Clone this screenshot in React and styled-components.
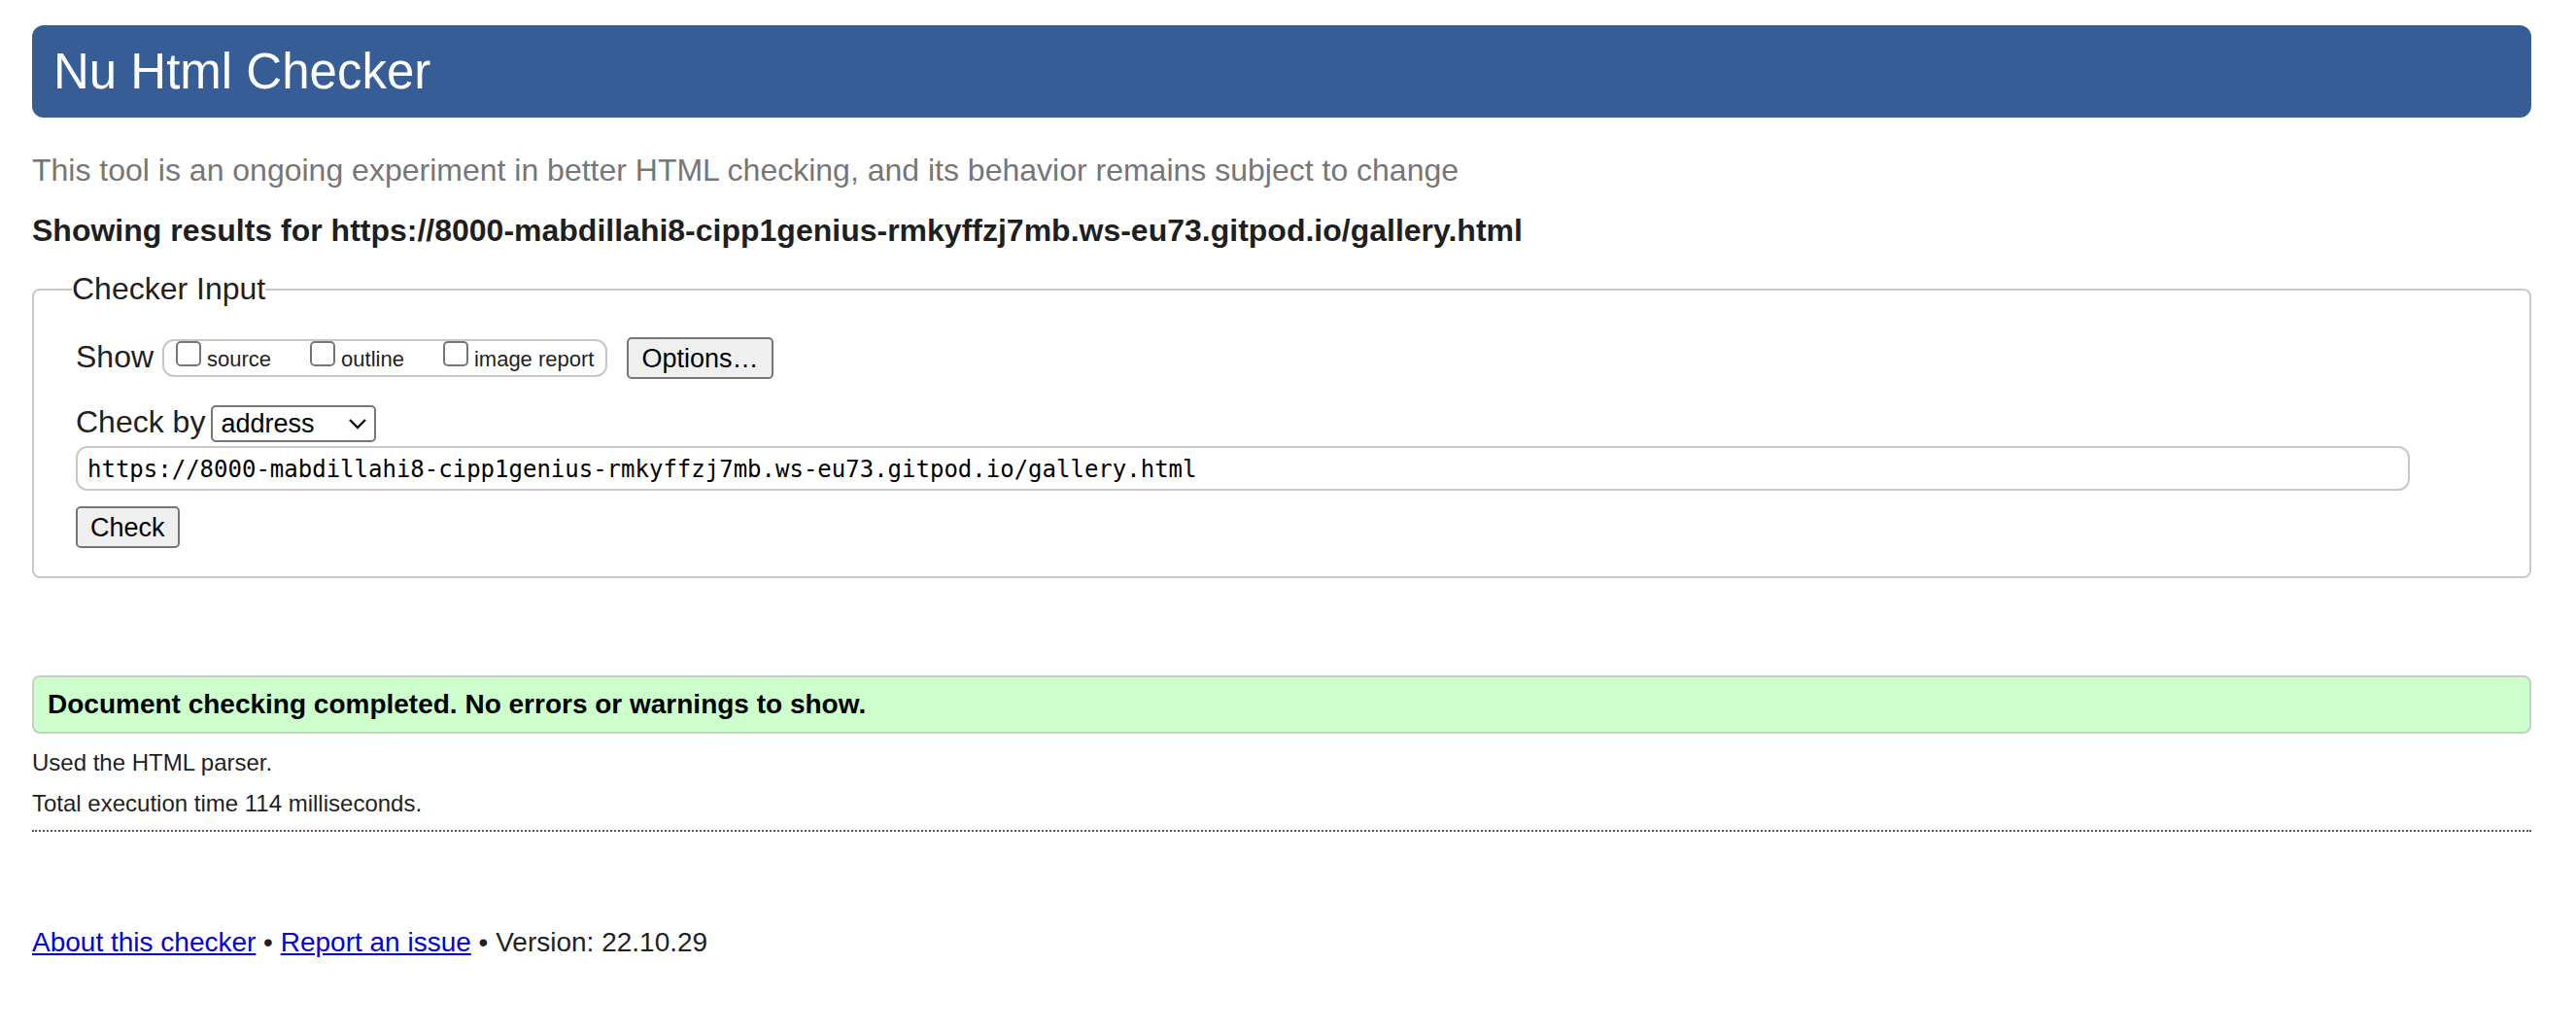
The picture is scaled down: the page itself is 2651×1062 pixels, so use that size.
import React from "react";
import styled, { createGlobalStyle } from "styled-components";

const Global = createGlobalStyle`
  *, *::before, *::after { box-sizing: border-box; }
  body {
    margin: 0;
    background: #fff;
    color: #1f1f1f;
    font-family: "Liberation Sans", Arial, sans-serif;
  }
`;

const Page = styled.div`
  padding: 26px 46px 64px 33px;
`;

const Title = styled.h1`
  margin: 0 0 34px;
  padding: 0 22px;
  border-radius: 12px;
  background: #365d95;
  color: #fdfdff;
  font-size: 51px;
  font-weight: 400;
  line-height: 95px;
`;

const Tagline = styled.p`
  margin: 0 0 22px;
  color: #767676;
  font-size: 32px;
  line-height: 40px;
`;

const ResultsHeading = styled.h2`
  margin: 0 0 21px;
  font-size: 32px;
  line-height: 40px;
`;

const InputPanel = styled.fieldset`
  display: block;
  min-width: 0;
  margin: 0;
  padding: 30px 43px 29px;
  border: 2px solid #c8c8c8;
  border-radius: 8px;
`;

const Legend = styled.legend`
  margin-left: -4px;
  padding: 0;
  font-size: 32px;
  line-height: 39px;
`;

const Row = styled.div`
  display: flex;
  align-items: center;
  gap: ${(p) => p.$gap}px;
  margin-bottom: ${(p) => p.$after}px;
`;

const RowLabel = styled.label`
  padding-bottom: 4px;
  font-size: 32px;
  line-height: 34px;
`;

const ShowGroup = styled.div`
  display: flex;
  align-items: center;
  gap: 40px;
  height: 39px;
  margin-right: 11px;
  padding: 0 12px;
  border: 2px solid #c8c8c8;
  border-radius: 12px;
`;

const CheckLabel = styled.label`
  display: flex;
  align-items: baseline;
  gap: 6px;
  padding-bottom: 4px;
  font-size: 22px;
  line-height: 26px;
`;

const Tick = styled.input`
  appearance: none;
  width: 26px;
  height: 26px;
  margin: 0;
  border: 2px solid #767676;
  border-radius: 5px;
  background: #fff;
  &:checked { background: #0075ff; }
`;

const Button = styled.button`
  height: 43px;
  margin: 0;
  padding: 0 13px;
  border: 2px solid #767676;
  border-radius: 5px;
  background: #efefef;
  color: #000;
  font: 27px/38px "Liberation Sans", Arial, sans-serif;
`;

const SelectBox = styled.span`
  display: inline-grid;
  align-items: center;
`;

const Select = styled.select`
  appearance: none;
  grid-area: 1 / 1;
  width: 170px;
  height: 38px;
  padding: 0 40px 0 8px;
  border: 2px solid #767676;
  border-radius: 5px;
  background: #fff;
  color: #000;
  font: 27px/34px "Liberation Sans", Arial, sans-serif;
`;

const Chevron = styled.svg`
  grid-area: 1 / 1;
  justify-self: end;
  margin-right: 9px;
  pointer-events: none;
`;

const Address = styled.input`
  display: block;
  width: calc(100% - 80px);
  height: 46px;
  margin: 0 0 16px;
  padding: 2px 10px 0;
  border: 2px solid #c8c8c8;
  border-radius: 12px;
  background: #fff;
  color: #000;
  font: 24px "DejaVu Sans Mono", "Liberation Mono", monospace;
`;

const Success = styled.p`
  margin: 100px 0 9px;
  padding: 0 14px;
  border: 2px solid #c4d0c4;
  border-radius: 8px;
  background: #ccffcc;
  color: #000;
  font-size: 28px;
  font-weight: 700;
  line-height: 56px;
`;

const Details = styled.div`
  padding-bottom: 6px;
  border-bottom: 2px dotted #555;
`;

const Detail = styled.p`
  margin: 0;
  font-size: 24px;
  line-height: 42px;
`;

const Footer = styled.footer`
  margin-top: 97px;
  font-size: 28px;
  line-height: 34px;
`;

const Link = styled.a`
  color: #0000e0;
  text-decoration: underline;
`;

const options = ["source", "outline", "image report"];

export default function App() {
  return (
    <Page>
      <Global />
      <Title>Nu Html Checker</Title>
      <Tagline>
        This tool is an ongoing experiment in better HTML checking, and its behavior remains subject to change
      </Tagline>
      <ResultsHeading>
        Showing results for https://8000-mabdillahi8-cipp1genius-rmkyffzj7mb.ws-eu73.gitpod.io/gallery.html
      </ResultsHeading>
      <form onSubmit={(e) => e.preventDefault()}>
        <InputPanel>
          <Legend>Checker Input</Legend>
          <Row $gap={9} $after={27}>
            <RowLabel as="span" id="show">Show</RowLabel>
            <ShowGroup role="group" aria-labelledby="show">
              {options.map((name) => (
                <CheckLabel key={name}>
                  <Tick type="checkbox" />
                  {name}
                </CheckLabel>
              ))}
            </ShowGroup>
            <Button type="button">Options…</Button>
          </Row>
          <Row $gap={6} $after={4}>
            <RowLabel htmlFor="method">Check by</RowLabel>
            <SelectBox>
              <Select id="method" defaultValue="address">
                <option value="address">address</option>
                <option value="upload">file upload</option>
                <option value="text">text input</option>
              </Select>
              <Chevron width="20" height="14" viewBox="0 0 20 14" aria-hidden="true">
                <path d="M2 3 L10 11 L18 3" fill="none" stroke="#111" strokeWidth="2.3" />
              </Chevron>
            </SelectBox>
          </Row>
          <Address
            type="text"
            aria-label="Address"
            defaultValue="https://8000-mabdillahi8-cipp1genius-rmkyffzj7mb.ws-eu73.gitpod.io/gallery.html"
          />
          <Row $gap={0} $after={0}>
            <Button type="submit">Check</Button>
          </Row>
        </InputPanel>
      </form>
      <Success>Document checking completed. No errors or warnings to show.</Success>
      <Details>
        <Detail>Used the HTML parser.</Detail>
        <Detail>Total execution time 114 milliseconds.</Detail>
      </Details>
      <Footer>
        <Link href="#about">About this checker</Link> • <Link href="#issue">Report an issue</Link> • Version: 22.10.29
      </Footer>
    </Page>
  );
}
